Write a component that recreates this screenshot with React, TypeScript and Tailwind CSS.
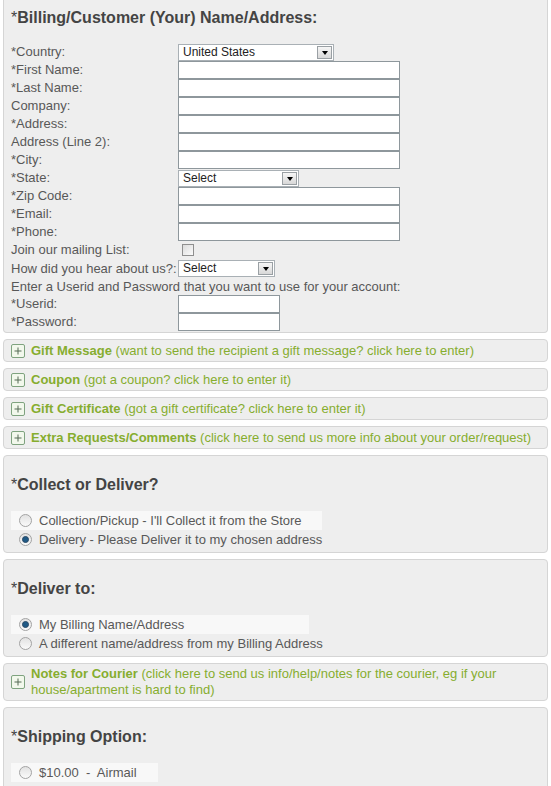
import React from "react";

const font = "font-['Liberation_Sans',Arial,sans-serif]";
const panel = "rounded-[4px] border border-[#d5d5d5] bg-[#eeeeee]";

function FakeSelect({ value, className }: { value: string; className: string }) {
  return (
    <div className={`flex h-[17px] items-center border border-[#a9b0b5] bg-white ${className}`}>
      <span className="flex-1 pl-[4px] text-[12px] leading-[15px] text-[#222]">{value}</span>
      <span className="mr-px flex h-[13px] w-[15px] items-center justify-center border border-[#9aa0a4] bg-gradient-to-b from-[#f6f6f6] to-[#d8d8d8]">
        <span className="mt-px h-0 w-0 border-x-[3.5px] border-t-[4px] border-x-transparent border-t-black" />
      </span>
    </div>
  );
}

function TextBox({ className = "w-[222px]" }: { className?: string }) {
  return <div className={`h-[18px] border border-[#8e979c] bg-white ${className}`} />;
}

function Row({ label, children, h = "h-[18px]" }: { label: string; children?: React.ReactNode; h?: string }) {
  return (
    <div className={`flex items-center ${h}`}>
      <span className="w-[167px] shrink-0 text-[13px] leading-[18px] text-[#585858]">{label}</span>
      {children}
    </div>
  );
}

function PlusIcon() {
  return (
    <span className="flex h-[14px] w-[14px] shrink-0 items-center justify-center rounded-[2px] border border-[#7fa37f] bg-[#f2f8ec]">
      <svg width="10" height="10" viewBox="0 0 10 10">
        <path d="M5 1.5v7M1.5 5h7" stroke="#556b55" strokeWidth="1" />
      </svg>
    </span>
  );
}

function Toggle({ title, note }: { title: string; note: string }) {
  return (
    <div className={`${panel} flex h-[23px] items-center gap-[6px] pl-[7px]`}>
      <PlusIcon />
      <span className="text-[13px] leading-[16px] text-[#86ad2f]">
        <b>{title}</b> {note}
      </span>
    </div>
  );
}

function Radio({ checked }: { checked?: boolean }) {
  return (
    <span className="flex h-[13px] w-[13px] shrink-0 items-center justify-center rounded-full border border-[#a3a3a3] bg-gradient-to-b from-[#e2e2e2] to-[#fafafa]">
      {checked && <span className="h-[7px] w-[7px] rounded-full border border-[#2a4a66] bg-[#1f5a86]" />}
    </span>
  );
}

function Option({ label, checked, hl }: { label: string; checked?: boolean; hl?: string }) {
  return (
    <div className={`flex h-[19px] items-center gap-[7px] pl-[8px] ${hl ?? ""}`}>
      <Radio checked={checked} />
      <span className="text-[13px] leading-[18px] text-[#585858]">{label}</span>
    </div>
  );
}

function Heading({ text }: { text: string }) {
  return (
    <h2 className="text-[16px] font-bold leading-[19px] text-[#444]">
      <span className="font-normal">*</span>
      {text}
    </h2>
  );
}

export default function App() {
  return (
    <div className={`${font} min-h-[786px] bg-white px-[3px]`}>
      {/* billing */}
      <div className={`${panel} rounded-t-none border-t-0 pb-px pl-[7px] pt-[8px]`}>
        <Heading text="Billing/Customer (Your) Name/Address:" />
        <div className="mt-[16px] flex flex-col">
          <Row label="*Country:">
            <FakeSelect value="United States" className="w-[156px]" />
          </Row>
          <Row label="*First Name:"><TextBox /></Row>
          <Row label="*Last Name:"><TextBox /></Row>
          <Row label="Company:"><TextBox /></Row>
          <Row label="*Address:"><TextBox /></Row>
          <Row label="Address (Line 2):"><TextBox /></Row>
          <Row label="*City:"><TextBox /></Row>
          <Row label="*State:">
            <FakeSelect value="Select" className="w-[121px]" />
          </Row>
          <Row label="*Zip Code:"><TextBox /></Row>
          <Row label="*Email:"><TextBox /></Row>
          <Row label="*Phone:"><TextBox /></Row>
          <Row label="Join our mailing List:">
            <span className="ml-[4px] h-[12px] w-[12px] border border-[#8f8f8f] bg-gradient-to-br from-[#dcdcdc] to-[#fbfbfb]" />
          </Row>
          <Row label="How did you hear about us?:" h="h-[19px]">
            <FakeSelect value="Select" className="w-[97px]" />
          </Row>
          <div className="h-[17px] text-[13px] leading-[17px] text-[#585858]">
            Enter a Userid and Password that you want to use for your account:
          </div>
          <Row label="*Userid:"><TextBox className="w-[102px]" /></Row>
          <Row label="*Password:"><TextBox className="w-[102px]" /></Row>
        </div>
      </div>

      <div className="mt-[6px] flex flex-col gap-[6px]">
        <Toggle title="Gift Message" note="(want to send the recipient a gift message? click here to enter)" />
        <Toggle title="Coupon" note="(got a coupon? click here to enter it)" />
        <Toggle title="Gift Certificate" note="(got a gift certificate? click here to enter it)" />
        <Toggle title="Extra Requests/Comments" note="(click here to send us more info about your order/request)" />

        <div className={`${panel} pb-[3px] pl-[7px] pt-[19px]`}>
          <Heading text="Collect or Deliver?" />
          <div className="mt-[17px]">
            <Option label="Collection/Pickup - I'll Collect it from the Store" hl="w-[311px] bg-[#f8f8f8]" />
            <Option label="Delivery - Please Deliver it to my chosen address" checked />
          </div>
        </div>

        <div className={`${panel} pb-[3px] pl-[7px] pt-[19px]`}>
          <Heading text="Deliver to:" />
          <div className="mt-[17px]">
            <Option label="My Billing Name/Address" checked hl="w-[298px] bg-[#f8f8f8]" />
            <Option label="A different name/address from my Billing Address" />
          </div>
        </div>

        <div className={`${panel} flex h-[38px] items-center gap-[6px] pl-[7px]`}>
          <PlusIcon />
          <span className="text-[13px] leading-[16px] text-[#86ad2f]">
            <b>Notes for Courier</b> (click here to send us info/help/notes for the courier, eg if your
            <br />
            house/apartment is hard to find)
          </span>
        </div>

        <div className={`${panel} pb-[10px] pl-[7px] pt-[19px]`}>
          <Heading text="Shipping Option:" />
          <div className="mt-[17px]">
            <Option label="$10.00  -  Airmail" hl="w-[147px] bg-[#f8f8f8] whitespace-pre" />
          </div>
        </div>
      </div>
    </div>
  );
}
